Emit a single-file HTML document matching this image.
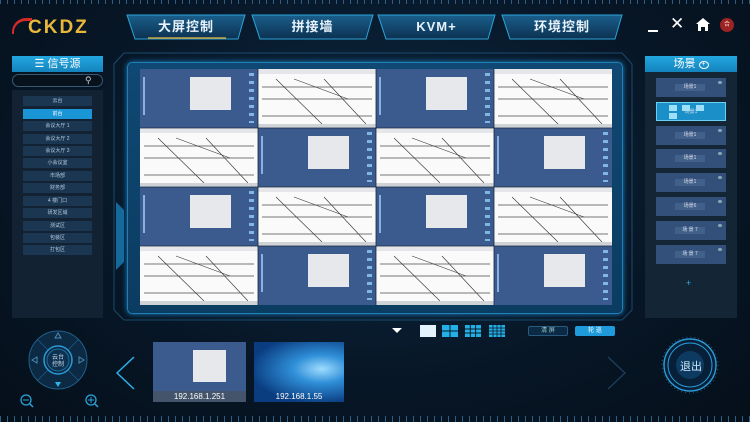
<!DOCTYPE html>
<html><head><meta charset="utf-8"><style>
*{margin:0;padding:0;box-sizing:border-box}
body{width:750px;height:422px;overflow:hidden;background:#06121f;font-family:"Liberation Sans","Noto Sans CJK SC",sans-serif;position:relative;color:#cfe6f5}
.a{position:absolute}
.tab{position:absolute;top:15px;height:24px;color:#e8f2fa;font-weight:bold;font-size:13px;text-align:center;line-height:24px;letter-spacing:1px}
.li{position:absolute;left:23px;width:69px;height:10px;background:#1a3650;font-size:5px;color:#b8cbe0;text-align:center;line-height:10px}
.sc{position:absolute;left:656px;width:70px;height:19px;background:#33507a}
.sc span{position:absolute;left:19px;top:6px;width:30px;height:7px;background:#41608a;font-size:5px;color:#dde;text-align:center;line-height:7px}
.sc i{position:absolute;right:4px;top:3px;width:4px;height:3px;border-radius:50%;background:#8ab}
.cell{position:absolute;width:118px;height:59px;overflow:hidden}
.b{background:#3b5a8d}
.b:after{content:"";position:absolute;left:50px;top:8px;width:41px;height:33px;background:#e6e8ec}
.b:before{content:"";position:absolute;left:3px;top:8px;width:2px;height:38px;background:#8ab2e0}
.b i{position:absolute;right:4px;top:4px;width:5px;height:50px;background:repeating-linear-gradient(#7fb6e6 0 3px,transparent 3px 8px)}
.w{background:#fafafa}
</style></head><body>
<div class="a" style="left:0;top:0;width:750px;height:422px;background:radial-gradient(ellipse at 50% 40%,#0d2a44 0%,#071626 60%,#050f1a 100%)"></div>
<div class="a" style="left:0;top:0;width:750px;height:4px;background:repeating-linear-gradient(90deg,#2d5f86 0 1px,transparent 1px 7px)"></div>
<div class="a" style="left:0;top:416px;width:750px;height:6px;background:repeating-linear-gradient(90deg,#2d5f86 0 1px,transparent 1px 7px)"></div>
<!-- logo -->
<div class="a" style="left:28px;top:17px;font-size:19px;font-weight:900;color:#e9b73a;letter-spacing:2px">CKDZ</div>
<div class="a" style="left:12px;top:18px;width:20px;height:16px;border-top:3px solid #d42a2a;border-left:2px solid #d42a2a;border-radius:14px 0 0 0"></div>
<!-- tabs -->
<svg class="a" style="left:120px;top:13px" width="510" height="30">
<defs><linearGradient id="tg" x1="0" y1="0" x2="0" y2="1"><stop offset="0" stop-color="#1a5f8c"/><stop offset="1" stop-color="#0c3150"/></linearGradient></defs>
<g fill="url(#tg)" stroke="#2aa4d8" stroke-width="1">
<polygon points="7,2 125,2 118,26 15,26"/><polygon points="132,2 253,2 246,26 140,26"/>
<polygon points="258,2 375,2 368,26 266,26"/><polygon points="382,2 502,2 495,26 390,26"/></g>
<line x1="28" y1="25" x2="106" y2="25" stroke="#c9a640" stroke-width="1.5"/></svg>
<div class="tab" style="left:127px;width:118px">大屏控制</div>
<div class="tab" style="left:252px;width:121px">拼接墙</div>
<div class="tab" style="left:378px;width:117px">KVM+</div>
<div class="tab" style="left:502px;width:120px">环境控制</div>
<!-- top right icons -->
<div class="a" style="left:648px;top:30px;width:10px;height:2px;background:#fff"></div>
<div class="a" style="left:670px;top:14px;font-size:17px;color:#fff">✕</div>
<svg class="a" style="left:696px;top:18px" width="14" height="13"><polygon points="7,0 14,6 12,6 12,13 9,13 9,9 5,9 5,13 2,13 2,6 0,6" fill="#fff"/></svg>
<div class="a" style="left:720px;top:18px;width:14px;height:14px;border-radius:50%;background:#9b2323;font-size:6px;line-height:14px;text-align:center;color:#fcc">合</div>
<!-- left panel -->
<div class="a" style="left:12px;top:56px;width:91px;height:16px;background:linear-gradient(#23a7e0,#1483bd);color:#fff;font-size:11px;text-align:center;line-height:16px">☰ 信号源</div>
<div class="a" style="left:12px;top:74px;width:91px;height:13px;border:1px solid #3a5a74;border-radius:7px;background:#08121c"></div>
<div class="a" style="left:85px;top:75px;font-size:9px;color:#ccd">⚲</div>
<div class="a" style="left:12px;top:90px;width:91px;height:228px;background:#132232"></div>
<div class="li" style="top:96px">云台</div>
<div class="li" style="top:109px;background:#1a96d6;color:#fff">前台</div>
<div class="li" style="top:121px">会议大厅 1</div>
<div class="li" style="top:134px">会议大厅 2</div>
<div class="li" style="top:146px">会议大厅 3</div>
<div class="li" style="top:158px">小会议室</div>
<div class="li" style="top:171px">市场部</div>
<div class="li" style="top:183px">财务部</div>
<div class="li" style="top:196px">4 楼门口</div>
<div class="li" style="top:208px">研发区域</div>
<div class="li" style="top:221px">测试区</div>
<div class="li" style="top:233px">包装区</div>
<div class="li" style="top:245px">打包区</div>
<!-- main frame -->
<svg class="a" style="left:112px;top:52px" width="522" height="270"><polyline points="12,1 510,1 520,12 520,258 510,268 12,268 2,258 2,12 12,1" fill="none" stroke="#1b4a6a" stroke-width="1"/>
<polygon points="4,150 12,158 12,210 4,218" fill="#156a9a"/></svg>
<div class="a" style="left:127px;top:62px;width:496px;height:252px;border-radius:5px;background:linear-gradient(#0f4872,#0b3c62);box-shadow:0 0 6px #1a7fbf;border:1px solid #1f7fb8"></div>
<!-- cells -->
<div class="cell b" style="left:140px;top:69px"><i></i></div><div class="cell w" style="left:258px;top:69px"></div><div class="cell b" style="left:376px;top:69px"><i></i></div><div class="cell w" style="left:494px;top:69px"></div>
<div class="cell w" style="left:140px;top:128px"></div><div class="cell b" style="left:258px;top:128px"><i></i></div><div class="cell w" style="left:376px;top:128px"></div><div class="cell b" style="left:494px;top:128px"><i></i></div>
<div class="cell b" style="left:140px;top:187px"><i></i></div><div class="cell w" style="left:258px;top:187px"></div><div class="cell b" style="left:376px;top:187px"><i></i></div><div class="cell w" style="left:494px;top:187px"></div>
<div class="cell w" style="left:140px;top:246px"></div><div class="cell b" style="left:258px;top:246px"><i></i></div><div class="cell w" style="left:376px;top:246px"></div><div class="cell b" style="left:494px;top:246px"><i></i></div>
<svg class="a" style="left:140px;top:69px" width="473" height="236">
<defs><g id="L" fill="none"><g stroke="#777" stroke-width="1"><line x1="4" y1="18" x2="114" y2="18"/><line x1="4" y1="30" x2="114" y2="30"/><line x1="4" y1="47" x2="114" y2="47"/></g><g stroke="#333" stroke-width="0.6"><line x1="18" y1="10" x2="64" y2="55"/><line x1="36" y1="10" x2="90" y2="30"/><line x1="66" y1="10" x2="108" y2="55"/></g><rect x="0" y="0" width="118" height="5" fill="#e4e6ea" stroke="none"/><rect x="0" y="55" width="118" height="4" fill="#cfd3d8" stroke="none"/></g></defs>
<use href="#L" x="118" y="0"/><use href="#L" x="354" y="0"/><use href="#L" x="0" y="59"/><use href="#L" x="236" y="59"/>
<use href="#L" x="118" y="118"/><use href="#L" x="354" y="118"/><use href="#L" x="0" y="177"/><use href="#L" x="236" y="177"/>
<g stroke="#1a2a40" stroke-width="0.8"><line x1="118" y1="0" x2="118" y2="236"/><line x1="236" y1="0" x2="236" y2="236"/><line x1="354" y1="0" x2="354" y2="236"/><line x1="0" y1="59" x2="473" y2="59"/><line x1="0" y1="118" x2="473" y2="118"/><line x1="0" y1="177" x2="473" y2="177"/></g>
</svg>
<!-- right panel -->
<div class="a" style="left:645px;top:56px;width:92px;height:16px;background:linear-gradient(#23a7e0,#1483bd);color:#fff;font-size:11px;text-align:center;line-height:16px">场景 <span style="display:inline-block;width:10px;height:8px;border:1px solid #fff;border-radius:50%;font-size:7px;line-height:6px;vertical-align:1px">+</span></div>
<div class="a" style="left:645px;top:72px;width:92px;height:246px;background:#142536"></div>
<div class="sc" style="top:78px"><span>场景1</span><i></i></div>
<div class="sc" style="top:102px;background:#1b90c8;border:1px solid #6cd0f5"><span style="background:transparent">场景1</span>
<b class="a" style="left:12px;top:2px;width:8px;height:6px;background:#9ee0f8"></b><b class="a" style="left:25px;top:2px;width:8px;height:6px;background:#9ee0f8"></b><b class="a" style="left:39px;top:2px;width:8px;height:6px;background:#9ee0f8"></b><b class="a" style="left:12px;top:10px;width:8px;height:6px;background:#9ee0f8"></b></div>
<div class="sc" style="top:126px"><span>场景1</span><i></i></div>
<div class="sc" style="top:149px"><span>场景1</span><i></i></div>
<div class="sc" style="top:173px"><span>场景1</span><i></i></div>
<div class="sc" style="top:197px"><span>场景6</span><i></i></div>
<div class="sc" style="top:221px"><span>场 景 7</span><i></i></div>
<div class="sc" style="top:245px"><span>场 景 7</span><i></i></div>
<div class="a" style="left:686px;top:278px;font-size:9px;color:#2bb0e0">+</div>
<!-- layout controls -->
<svg class="a" style="left:392px;top:328px" width="12" height="7"><polygon points="0,0 10,0 5,5" fill="#fff"/></svg>
<div class="a" style="left:420px;top:325px;width:16px;height:12px;background:#e4f2fb"></div>
<svg class="a" style="left:442px;top:325px" width="66" height="12"><g fill="#22b0e6"><rect x="0" y="0" width="7.5" height="5.5"/><rect x="8.5" y="0" width="7.5" height="5.5"/><rect x="0" y="6.5" width="7.5" height="5.5"/><rect x="8.5" y="6.5" width="7.5" height="5.5"/></g>
<g fill="#22b0e6"><rect x="23" y="0" width="16" height="12"/></g><g stroke="#0a1a2a" stroke-width="1"><line x1="28.3" y1="0" x2="28.3" y2="12"/><line x1="33.6" y1="0" x2="33.6" y2="12"/><line x1="23" y1="4" x2="39" y2="4"/><line x1="23" y1="8" x2="39" y2="8"/></g>
<g fill="#22b0e6"><rect x="47" y="0" width="16" height="12"/></g><g stroke="#0a1a2a" stroke-width="0.8"><line x1="51" y1="0" x2="51" y2="12"/><line x1="55" y1="0" x2="55" y2="12"/><line x1="59" y1="0" x2="59" y2="12"/><line x1="47" y1="3" x2="63" y2="3"/><line x1="47" y1="6" x2="63" y2="6"/><line x1="47" y1="9" x2="63" y2="9"/></g></svg>
<div class="a" style="left:528px;top:326px;width:40px;height:10px;border:1px solid #2a5a80;border-radius:2px;background:#0d2a44;font-size:6px;text-align:center;line-height:8px;color:#9cc">清 屏</div>
<div class="a" style="left:575px;top:326px;width:40px;height:10px;border-radius:2px;background:#1f9bdc;font-size:6px;text-align:center;line-height:10px;color:#fff">轮 巡</div>
<!-- joystick -->
<svg class="a" style="left:20px;top:328px" width="80" height="90">
<circle cx="38" cy="32" r="29" fill="#0d2a44" stroke="#1f5f8a"/>
<g stroke="#1f5f8a" stroke-width="0.6"><line x1="17" y1="11" x2="59" y2="53"/><line x1="59" y1="11" x2="17" y2="53"/></g>
<circle cx="38" cy="32" r="14" fill="#0b2a46" stroke="#2a9ad6" stroke-width="1.5"/>
<circle cx="38" cy="32" r="11" fill="#0d3150" stroke="#1f6f9f"/>
<polygon points="38,5 35,10 41,10" fill="none" stroke="#4a8ab0"/><polygon points="35,54 41,54 38,59" fill="#2bb6e8"/>
<polygon points="12,32 17,29 17,35" fill="none" stroke="#4a8ab0"/><polygon points="64,32 59,29 59,35" fill="none" stroke="#4a8ab0"/>
<text x="38" y="31" font-size="6" fill="#cde" text-anchor="middle" font-family="Noto Sans CJK SC">云台</text>
<text x="38" y="38" font-size="6" fill="#cde" text-anchor="middle" font-family="Noto Sans CJK SC">控制</text>
<circle cx="6" cy="72" r="5" fill="none" stroke="#2aa4d8" stroke-width="1.3"/><line x1="3" y1="72" x2="9" y2="72" stroke="#2aa4d8"/><line x1="10" y1="76" x2="13" y2="79" stroke="#2aa4d8" stroke-width="1.5"/>
<circle cx="71" cy="72" r="5" fill="none" stroke="#2aa4d8" stroke-width="1.3"/><line x1="68" y1="72" x2="74" y2="72" stroke="#2aa4d8"/><line x1="71" y1="69" x2="71" y2="75" stroke="#2aa4d8"/><line x1="75" y1="76" x2="78" y2="79" stroke="#2aa4d8" stroke-width="1.5"/>
</svg>
<!-- arrows -->
<svg class="a" style="left:113px;top:355px" width="24" height="36"><polyline points="21,2 4,18 21,34" fill="none" stroke="#2ab0e6" stroke-width="1.5"/></svg>
<svg class="a" style="left:605px;top:355px" width="24" height="36"><polyline points="3,2 20,18 3,34" fill="none" stroke="#1d3f5c" stroke-width="1.3"/></svg>
<!-- thumbnails -->
<div class="a" style="left:153px;top:342px;width:93px;height:60px;background:#3b5a8d"></div>
<div class="a" style="left:193px;top:350px;width:33px;height:32px;background:#e6e8ec"></div>
<div class="a" style="left:153px;top:391px;width:93px;height:11px;background:#44546a;color:#fff;font-size:8px;text-align:center;line-height:11px">192.168.1.251</div>
<div class="a" style="left:254px;top:342px;width:90px;height:60px;background:radial-gradient(ellipse at 75% 45%,#9fdcff 0%,#2f8fd8 30%,#0a3c80 75%)"></div>
<div class="a" style="left:254px;top:391px;width:90px;height:11px;color:#fff;font-size:8px;text-align:center;line-height:11px">192.168.1.55</div>
<!-- exit -->
<svg class="a" style="left:660px;top:335px" width="60" height="60">
<circle cx="30" cy="30" r="28" fill="none" stroke="#1f5f8a" stroke-dasharray="1 3"/>
<circle cx="30" cy="30" r="26" fill="#072038" stroke="#2a9ad6" stroke-width="1.5"/>
<circle cx="30" cy="30" r="22" fill="none" stroke="#2a9ad6" stroke-width="1"/>
<circle cx="30" cy="30" r="14" fill="#0d3a60"/>
</svg>
<div class="a" style="left:680px;top:358px;font-size:11px;color:#cfe8f8">退出</div>
</body></html>
